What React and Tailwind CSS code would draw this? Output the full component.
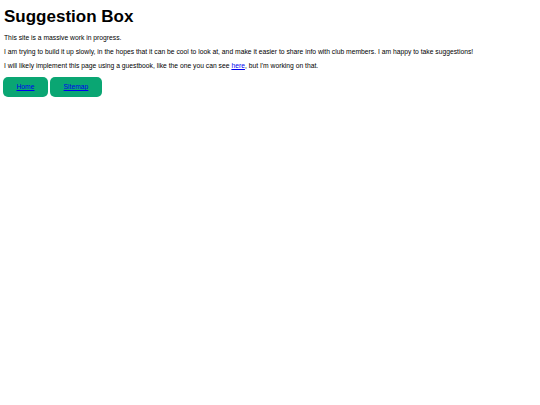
const App = () => {
  return (
    <div className="min-h-screen bg-white px-1 font-['Liberation_Sans',Arial,sans-serif] text-black">
      <h1 className="pt-[7px] text-[17px] font-bold leading-[20px]">Suggestion Box</h1>
      <p className="mt-[7px] text-[6.75px] leading-[8px]">This site is a massive work in progress.</p>
      <p className="mt-[6px] text-[6.75px] leading-[8px]">
        I am trying to build it up slowly, in the hopes that it can be cool to look at, and make it easier to share
        info with club members. I am happy to take suggestions!
      </p>
      <p className="mt-[6px] text-[6.75px] leading-[8px]">
        I will likely implement this page using a guestbook, like the one you can see{' '}
        <a href="#" className="text-[#0000ee] underline">
          here
        </a>
        , but I'm working on that.
      </p>
      <nav className="-ml-px mt-[7px] flex gap-[2px]">
        <a
          href="#"
          className="flex h-[20px] w-[45px] items-center justify-center rounded-[5px] bg-[#0aa673] text-[6.75px] text-[#0000ee] underline"
        >
          Home
        </a>
        <a
          href="#"
          className="flex h-[20px] w-[52px] items-center justify-center rounded-[5px] bg-[#0aa673] text-[6.75px] text-[#0000ee] underline"
        >
          Sitemap
        </a>
      </nav>
    </div>
  );
};

export default App;
